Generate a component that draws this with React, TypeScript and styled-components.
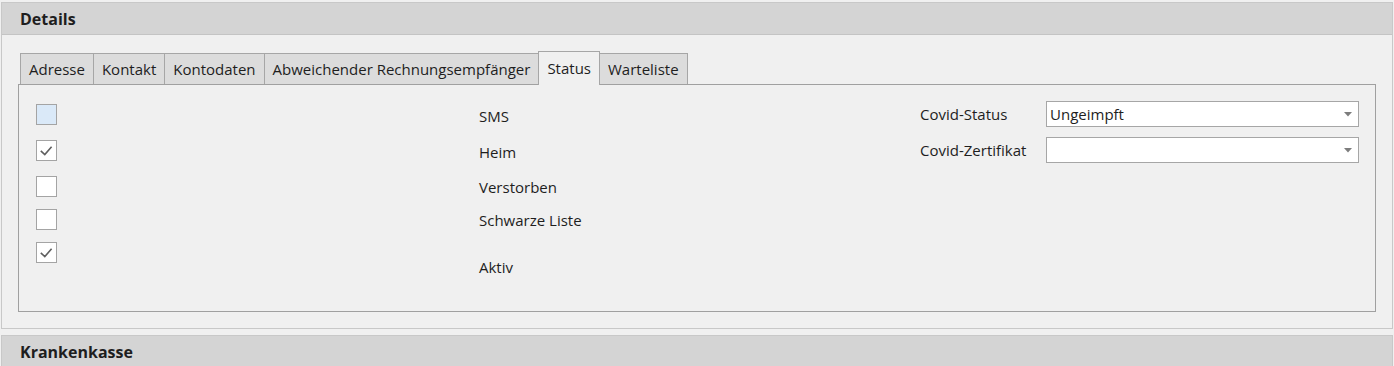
import React from "react";
import styled, { createGlobalStyle } from "styled-components";

const GlobalStyle = createGlobalStyle`
  html, body {
    margin: 0;
    padding: 0;
    background: #f0f0f0;
  }
  body {
    font-family: "Open Sans", "Noto Sans", sans-serif;
    font-size: 15px;
    color: #1e1e1e;
  }
`;

const Page = styled.div`
  padding: 2px 1px 0 1px;
  display: flex;
  flex-direction: column;
  gap: 6px;
`;

const Panel = styled.section`
  border: 1px solid #c8c8c8;
  background: #f0f0f0;
`;

const PanelHeader = styled.header`
  height: 32px;
  box-sizing: border-box;
  background: #d4d4d4;
  border-bottom: 1px solid #c4c4c4;
  display: flex;
  align-items: center;
  padding-left: 18px;
  font-weight: 700;
  font-size: 16px;
  color: #1e1e1e;
`;

const PanelBody = styled.div`
  padding: 16px;
`;

const TabRow = styled.div`
  display: flex;
  align-items: flex-end;
  padding-left: 2px;
  height: 34px;
  margin-bottom: -1px;
  position: relative;
  z-index: 1;
`;

const Tab = styled.div<{ $active?: boolean }>`
  box-sizing: border-box;
  height: ${(p) => (p.$active ? "34px" : "31px")};
  margin-bottom: ${(p) => (p.$active ? "0" : "1px")};
  padding: 0 8px;
  display: flex;
  align-items: center;
  justify-content: center;
  border: 1px solid #a6a6a6;
  border-bottom: none;
  background: ${(p) => (p.$active ? "#f0f0f0" : "#dcdcdc")};
  margin-left: -1px;
  position: relative;
  z-index: ${(p) => (p.$active ? 2 : 1)};
  white-space: nowrap;
  padding-bottom: ${(p) => (p.$active ? "1px" : "0")};
  &:first-child {
    margin-left: 0;
  }
`;

const TabContent = styled.div`
  box-sizing: border-box;
  height: 228px;
  border: 1px solid #a0a0a0;
  padding: 16px 16px 0 17px;
  display: flex;
`;

const LeftSection = styled.div`
  flex: 1;
  padding-top: 3px;
  display: flex;
  flex-direction: column;
`;

const CheckRow = styled.div<{ $height?: number; $labelOffset: number }>`
  display: grid;
  grid-template-columns: 443px auto;
  align-items: start;
  height: ${(p) => (p.$height ? `${p.$height}px` : "auto")};
  & > span {
    margin-top: ${(p) => p.$labelOffset}px;
  }
`;

const Label = styled.span`
  line-height: 20px;
  white-space: nowrap;
`;

const Box = styled.div<{ $hover?: boolean }>`
  box-sizing: border-box;
  width: 21px;
  height: 21px;
  border: 1px solid #a4a4a4;
  background: ${(p) => (p.$hover ? "#dae9f8" : "#ffffff")};
  display: flex;
  align-items: center;
  justify-content: center;
`;

const RightSection = styled.div`
  display: grid;
  grid-template-columns: 126px 313px;
  grid-auto-rows: 26px;
  row-gap: 10px;
  align-items: center;
  align-content: start;
`;

const Select = styled.div`
  box-sizing: border-box;
  height: 26px;
  border: 1px solid #a6a6a6;
  background: #ffffff;
  display: flex;
  align-items: center;
  justify-content: space-between;
  padding: 0 6px 0 3px;
`;

const Check = () => (
  <svg width="19" height="19" viewBox="0 0 19 19">
    <path
      d="M3.8 9.8 L7.8 13.6 L14.6 5.8"
      fill="none"
      stroke="#5f5f5f"
      strokeWidth="1.6"
    />
  </svg>
);

const Arrow = () => (
  <svg width="8" height="5" viewBox="0 0 8 5">
    <path d="M0 0 H8 L4 4.5 Z" fill="#7d7d7d" />
  </svg>
);

type Item = { label: string; checked: boolean; hover?: boolean; height?: number; offset: number };

const items: Item[] = [
  { label: "SMS", checked: false, hover: true, height: 36, offset: 2 },
  { label: "Heim", checked: true, height: 36, offset: 2 },
  { label: "Verstorben", checked: false, height: 33, offset: 1 },
  { label: "Schwarze Liste", checked: false, height: 33, offset: 1 },
  { label: "Aktiv", checked: true, offset: 15 },
];

const tabs = [
  "Adresse",
  "Kontakt",
  "Kontodaten",
  "Abweichender Rechnungsempfänger",
  "Status",
  "Warteliste",
];

export default function App() {
  return (
    <>
      <GlobalStyle />
      <Page>
        <Panel>
          <PanelHeader>Details</PanelHeader>
          <PanelBody>
            <TabRow>
              {tabs.map((t) => (
                <Tab key={t} $active={t === "Status"}>
                  {t}
                </Tab>
              ))}
            </TabRow>
            <TabContent>
              <LeftSection>
                {items.map((it) => (
                  <CheckRow key={it.label} $height={it.height} $labelOffset={it.offset}>
                    <Box $hover={it.hover}>{it.checked && <Check />}</Box>
                    <Label>{it.label}</Label>
                  </CheckRow>
                ))}
              </LeftSection>
              <RightSection>
                <Label>Covid-Status</Label>
                <Select>
                  <span>Ungeimpft</span>
                  <Arrow />
                </Select>
                <Label>Covid-Zertifikat</Label>
                <Select>
                  <span />
                  <Arrow />
                </Select>
              </RightSection>
            </TabContent>
          </PanelBody>
        </Panel>
        <Panel>
          <PanelHeader>Krankenkasse</PanelHeader>
        </Panel>
      </Page>
    </>
  );
}
